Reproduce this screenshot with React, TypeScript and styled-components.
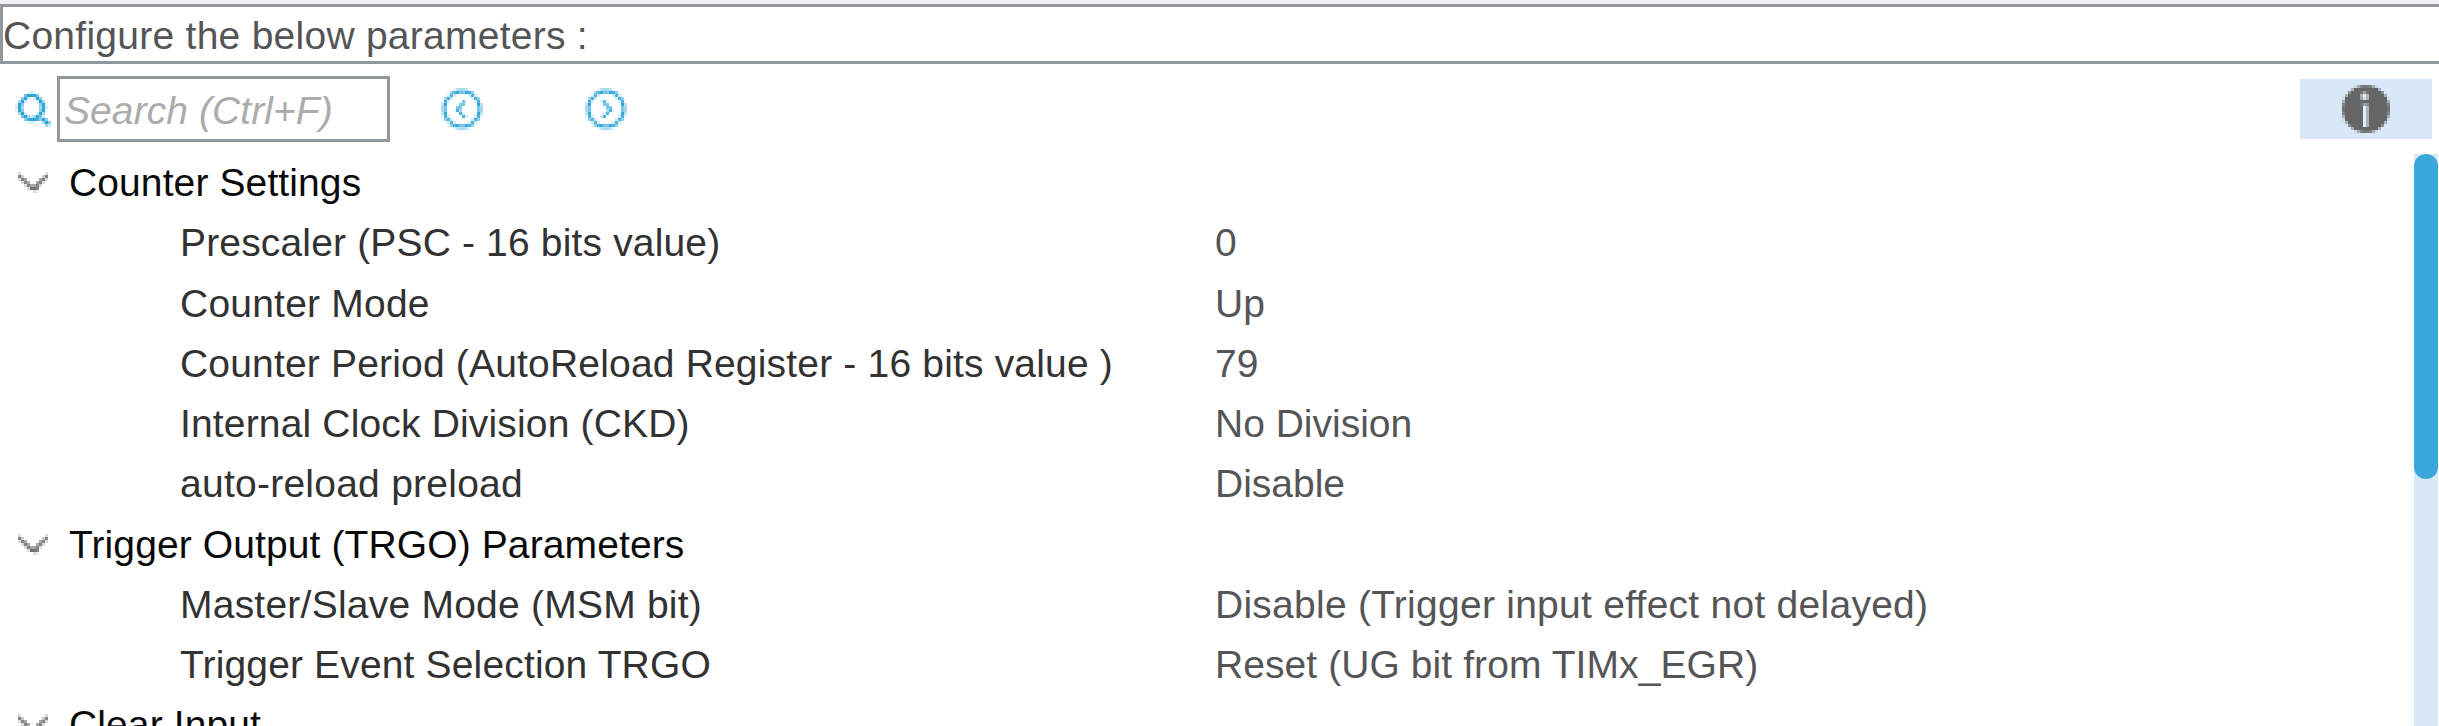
import React from "react";
import styled, { createGlobalStyle } from "styled-components";

const Global = createGlobalStyle`
  * { box-sizing: border-box; }
  html, body { margin: 0; background: #fff; overflow: hidden; }
  body { font-family: "Liberation Sans", Arial, sans-serif; font-size: 39px; color: #323232; }
`;

const Panel = styled.main`
  width: 2439px;
  height: 726px;
  display: flex;
  flex-direction: column;
  overflow: hidden;
  border-top: 4px solid #eef0f2;
`;

const Heading = styled.header`
  flex: none;
  height: 60px;
  border: 3px solid #90979d;
  border-right: 0;
  color: #555557;
  line-height: 58px;
  letter-spacing: 0.26px;
  white-space: pre;
`;

const Toolbar = styled.div`
  flex: none;
  display: flex;
  height: 89px;
  padding: 12px 7px 0 15px;
  align-items: flex-start;
`;

const SearchBox = styled.label`
  display: flex;
  width: 333px;
  height: 66px;
  margin-left: 6px;
  border: 3px solid #90979d;
  padding-left: 4px;
  font-style: italic;
  color: #acacac;
  line-height: 64px;
  letter-spacing: 0.08px;
`;

const Glyph = styled.svg<{ $top: number; $left?: number }>`
  display: block;
  flex: none;
  margin-top: ${(p) => p.$top}px;
  margin-left: ${(p) => p.$left ?? 0}px;
`;

const InfoButton = styled.button`
  width: 132px;
  height: 60px;
  margin: 3px 0 0 auto;
  padding: 0 0 0 42px;
  border: 0;
  background: #d9e8f6;
  display: flex;
  align-items: flex-start;
`;

const Body = styled.div`
  flex: 1;
  min-height: 0;
  display: flex;
  justify-content: space-between;
`;

const Tree = styled.div`
  flex: 1;
`;

const Row = styled.div`
  display: flex;
  height: 60.28px;
  line-height: 60px;
  white-space: pre;
`;

const GroupName = styled.span`
  margin-left: 21px;
  color: #0a0a0a;
  letter-spacing: 0.11px;
`;

const Name = styled.span<{ $track: number }>`
  width: 1035px;
  margin-left: 180px;
  letter-spacing: ${(p) => p.$track}px;
`;

const Value = styled.span<{ $track: number }>`
  color: #555557;
  letter-spacing: ${(p) => p.$track}px;
`;

const Track = styled.div`
  width: 24px;
  margin: 1px 1px 0 0;
  background: #d9e8f6;
`;

const Thumb = styled.div`
  height: 325px;
  border-radius: 12px;
  background: #39a9dc;
`;

/* Low-resolution icons: each digit is the ink strength of one 3px cell. */
const SEARCH = [
  "000012100000",
  "000699960000",
  "005920295000",
  "049200029400",
  "195000005910",
  "294000004920",
  "195000005910",
  "049200029400",
  "006942496200",
  "000589985950",
  "000012100495",
  "000000000042",
];

const RING = [
  "00001344310000",
  "00058966985000",
  "00282000028200",
  "05820000002850",
  "18200000000281",
  "39000000000093",
  "46000000000064",
];
const ring = [...RING, ...[...RING].reverse()];

const withArrow = (arrow: Record<number, string>) =>
  ring.map((line, y) =>
    arrow[y] ? line.slice(0, 4) + arrow[y] + line.slice(10) : line
  );

const PREVIOUS = withArrow({
  4: "000610",
  5: "006600",
  6: "066000",
  7: "184000",
  8: "008200",
  9: "000820",
});
const NEXT = withArrow({
  4: "027000",
  5: "006600",
  6: "000660",
  7: "000481",
  8: "002800",
  9: "038000",
});

const CHEVRON = [
  "2000000002",
  "7300000037",
  "2750000572",
  "0275005720",
  "0027557200",
  "0002887000",
  "0000021000",
];

const DISC = Array.from({ length: 16 }, (_, y) =>
  Array.from({ length: 16 }, (_, x) => {
    const d = Math.hypot(x - 7.5, y - 7.5);
    return Math.round(9 * Math.max(0, Math.min(1, 8.4 - d)));
  }).join("")
);

const LETTER_I = [
  "",
  "",
  "0000001410000000",
  "0000005950000000",
  "0000004850000000",
  "",
  "0000001430000000",
  ...Array(7).fill("0000000950000000"),
];

function Cells({ grid, ink }: { grid: string[]; ink: string }) {
  return (
    <g fill={ink} shapeRendering="crispEdges">
      {grid.flatMap((line, y) =>
        [...line].map((c, x) =>
          c === "0" ? null : (
            <rect key={`${x}-${y}`} x={x} y={y} width="1" height="1" fillOpacity={Number(c) / 9} />
          )
        )
      )}
    </g>
  );
}

function CellIcon(props: { grid: string[]; ink: string; top: number; left?: number; children?: React.ReactNode }) {
  const w = props.grid[0].length;
  const h = props.grid.length;
  return (
    <Glyph $top={props.top} $left={props.left} width={w * 3} height={h * 3} viewBox={`0 0 ${w} ${h}`}>
      <Cells grid={props.grid} ink={props.ink} />
      {props.children}
    </Glyph>
  );
}

type Item = { name: string; value: string; nameTrack: number; valueTrack: number };
const item = (name: string, value: string, nameTrack: number, valueTrack = 0): Item => ({
  name,
  value,
  nameTrack,
  valueTrack,
});

const groups: { name: string; items: Item[] }[] = [
  {
    name: "Counter Settings",
    items: [
      item("Prescaler (PSC - 16 bits value)", "0", 0.16),
      item("Counter Mode", "Up", 0.22),
      item("Counter Period (AutoReload Register - 16 bits value )", "79", 0.18),
      item("Internal Clock Division (CKD)", "No Division", 0.16),
      item("auto-reload preload", "Disable", 0.25),
    ],
  },
  {
    name: "Trigger Output (TRGO) Parameters",
    items: [
      item("Master/Slave Mode (MSM bit)", "Disable (Trigger input effect not delayed)", 0.23, 0.26),
      item("Trigger Event Selection TRGO", "Reset (UG bit from TIMx_EGR)", 0.15, 0.08),
    ],
  },
  { name: "Clear Input", items: [] },
];

export default function App() {
  return (
    <Panel>
      <Global />
      <Heading>Configure the below parameters :</Heading>
      <Toolbar>
        <CellIcon grid={SEARCH} ink="#2fa4da" top={15} />
        <SearchBox>Search (Ctrl+F)</SearchBox>
        <CellIcon grid={PREVIOUS} ink="#39a9dc" top={12} left={51} />
        <CellIcon grid={NEXT} ink="#39a9dc" top={12} left={102} />
        <InfoButton>
          <CellIcon grid={DISC} ink="#666666" top={6}>
            <Cells grid={LETTER_I} ink="#e2eefa" />
          </CellIcon>
        </InfoButton>
      </Toolbar>
      <Body>
        <Tree>
          {groups.map((g) => (
            <React.Fragment key={g.name}>
              <Row>
                <CellIcon grid={CHEVRON} ink="#606060" top={19} left={18} />
                <GroupName>{g.name}</GroupName>
              </Row>
              {g.items.map((it) => (
                <Row key={it.name}>
                  <Name $track={it.nameTrack}>{it.name}</Name>
                  <Value $track={it.valueTrack}>{it.value}</Value>
                </Row>
              ))}
            </React.Fragment>
          ))}
        </Tree>
        <Track>
          <Thumb />
        </Track>
      </Body>
    </Panel>
  );
}
